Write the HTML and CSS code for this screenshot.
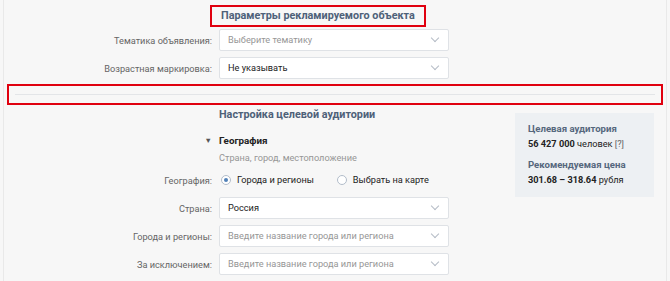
FILE: index.html
```html
<!DOCTYPE html>
<html lang="ru">
<head>
    <meta charset="UTF-8">
    <meta name="viewport" content="width=device-width, initial-scale=1.0">
    <title>Настройка объявления</title>
    <link rel="stylesheet" href="styles.css">
</head>
<body>
    <div class="page">
        <div class="section">
            <div class="form-grid">
                <div></div>
                <div class="section-title marked">Параметры рекламируемого объекта</div>

                <label class="label">Тематика объявления:</label>
                <div class="select placeholder">Выберите тематику<span class="chevron"></span></div>

                <label class="label">Возрастная маркировка:</label>
                <div class="select">Не указывать<span class="chevron"></span></div>
            </div>
        </div>

        <div class="divider-box"><div class="divider"></div></div>

        <div class="section targeting">
            <div class="form-grid">
                <div></div>
                <div class="section-title">Настройка целевой аудитории</div>

                <div class="toggle-arrow">▼</div>
                <div class="group-title">География</div>

                <div></div>
                <div class="group-hint">Страна, город, местоположение</div>

                <label class="label">География:</label>
                <div class="radios">
                    <span class="radio checked"></span><span class="radio-text">Города и регионы</span>
                    <span class="radio"></span><span class="radio-text">Выбрать на карте</span>
                </div>

                <label class="label">Страна:</label>
                <div class="select">Россия<span class="chevron"></span></div>

                <label class="label">Города и регионы:</label>
                <div class="select placeholder">Введите название города или региона<span class="chevron"></span></div>

                <label class="label">За исключением:</label>
                <div class="select placeholder">Введите название города или региона<span class="chevron"></span></div>
            </div>

            <div class="summary">
                <div class="summary-title">Целевая аудитория</div>
                <div class="summary-value"><b>56 427 000</b> человек <span class="hint">[?]</span></div>
                <div class="summary-title">Рекомендуемая цена</div>
                <div class="summary-value"><b>301.68 – 318.64</b> рубля</div>
            </div>
        </div>
    </div>
</body>
</html>
```

FILE: styles.css
```css
body {
    margin: 0;
    background-color: #f7f7f7;
    font-family: Roboto, "Open Sans", Arial, sans-serif;
    font-size: 9.2px;
    color: #222;
}
.page {
    margin: 0 3px;
    height: 281px;
    border-left: 1px solid #e9e9e9;
    border-right: 1px solid #e9e9e9;
    overflow: hidden;
}
.section {
    padding-top: 5px;
}
.form-grid {
    display: grid;
    grid-template-columns: 208px 230px;
    column-gap: 7px;
    row-gap: 6px;
    align-items: center;
}
.section-title {
    font-size: 10.8px;
    font-weight: bold;
    color: #4e6179;
    line-height: 18px;
    white-space: nowrap;
}
.section-title.marked {
    justify-self: start;
    margin-left: -9px;
    margin-bottom: -4px;
    padding: 0 9px;
    border: 2px solid #e0000f;
}
.label {
    text-align: right;
    color: #656565;
    white-space: nowrap;
}
.select {
    position: relative;
    height: 20px;
    line-height: 20px;
    padding: 0 8px;
    background-color: white;
    border: 1px solid #dfe2e6;
    border-radius: 2px;
    white-space: nowrap;
}
.select.placeholder {
    color: #969696;
}
.chevron {
    position: absolute;
    right: 10px;
    top: 5px;
    width: 5px;
    height: 5px;
    border-right: 1px solid #b5bcc6;
    border-bottom: 1px solid #b5bcc6;
    transform: rotate(45deg);
}
.divider-box {
    margin: 5px 3px 0;
    height: 17px;
    border: 2px solid #e0000f;
    display: flex;
    align-items: center;
    padding: 0 6px;
}
.divider {
    flex: 1;
    border-top: 1px solid #e3e5e8;
}
.targeting {
    display: flex;
    align-items: flex-start;
    padding-top: 1px;
}
.toggle-arrow {
    text-align: right;
    font-size: 7.5px;
    line-height: 14px;
    color: #555;
    margin-top: 4px;
}
.group-title {
    font-size: 9.8px;
    font-weight: bold;
    line-height: 14px;
    margin-top: 4px;
}
.group-hint {
    color: #969696;
    line-height: 12px;
    margin-top: -2px;
}
.radios {
    display: flex;
    align-items: center;
    height: 19px;
    margin-bottom: 2px;
    white-space: nowrap;
}
.radio {
    flex: none;
    width: 8px;
    height: 8px;
    border: 1px solid #b2bdca;
    border-radius: 50%;
    background-color: white;
    display: flex;
    align-items: center;
    justify-content: center;
    margin-left: 2px;
}
.radio.checked::after {
    content: "";
    width: 4px;
    height: 4px;
    border-radius: 50%;
    background-color: #5181b8;
}
.radio-text {
    margin-left: 6px;
    margin-right: 21px;
}
.summary {
    margin-left: 66px;
    width: 113px;
    margin-top: 7px;
    padding: 9px 13px 11px;
    background-color: #edf0f3;
    line-height: 13px;
    white-space: nowrap;
}
.summary-title {
    font-size: 9.6px;
    font-weight: bold;
    color: #55677d;
    margin-top: 8px;
}
.summary-title:first-child {
    margin-top: 0;
}
.summary-value {
    margin-top: 2px;
}
.hint {
    color: #656565;
}
```
